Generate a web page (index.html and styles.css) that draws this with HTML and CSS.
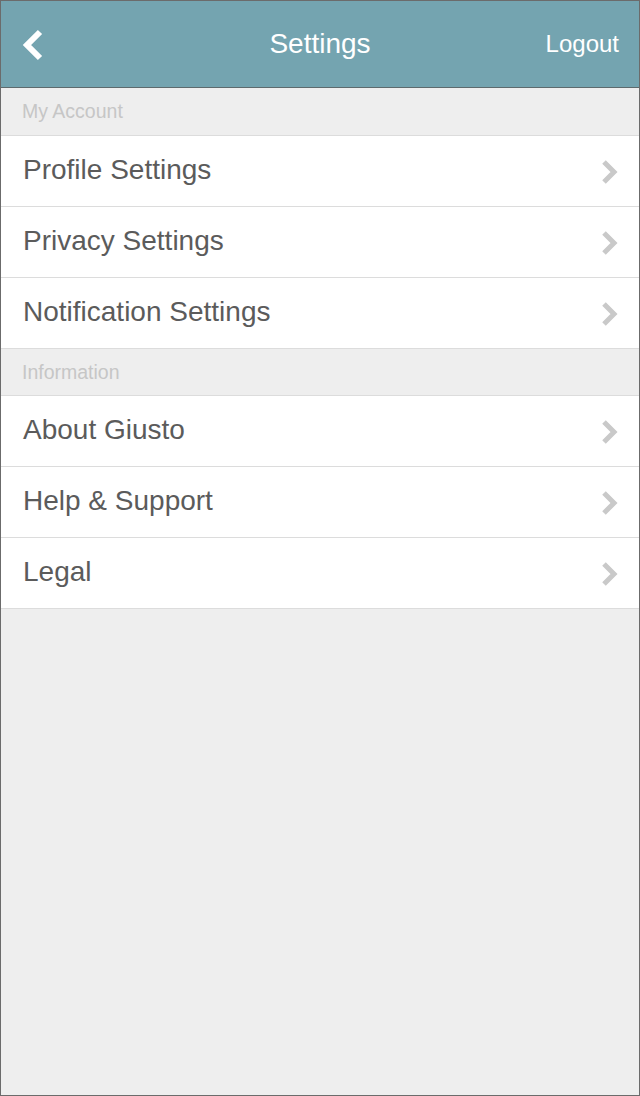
FILE: index.html
```html
<!DOCTYPE html>
<html>
<head>
<meta charset="utf-8">
<title>Settings</title>
<link rel="stylesheet" href="styles.css">
</head>
<body>
<div class="screen">
  <header class="topbar">
    <div class="back">
      <svg width="24" height="32" viewBox="0 0 24 32"><path d="M19 3 L6 16 L19 29" fill="none" stroke="#fff" stroke-width="6" stroke-linejoin="miter"/></svg>
    </div>
    <div class="title">Settings</div>
    <div class="logout">Logout</div>
  </header>

  <div class="section section-first">My Account</div>
  <div class="row"><span class="label">Profile Settings</span><svg class="chev" width="18" height="26" viewBox="0 0 18 26"><path d="M3 3 L13 13 L3 23" fill="none" stroke="#c9c9c9" stroke-width="5"/></svg></div>
  <div class="row"><span class="label">Privacy Settings</span><svg class="chev" width="18" height="26" viewBox="0 0 18 26"><path d="M3 3 L13 13 L3 23" fill="none" stroke="#c9c9c9" stroke-width="5"/></svg></div>
  <div class="row"><span class="label">Notification Settings</span><svg class="chev" width="18" height="26" viewBox="0 0 18 26"><path d="M3 3 L13 13 L3 23" fill="none" stroke="#c9c9c9" stroke-width="5"/></svg></div>

  <div class="section">Information</div>
  <div class="row"><span class="label">About Giusto</span><svg class="chev" width="18" height="26" viewBox="0 0 18 26"><path d="M3 3 L13 13 L3 23" fill="none" stroke="#c9c9c9" stroke-width="5"/></svg></div>
  <div class="row"><span class="label">Help &amp; Support</span><svg class="chev" width="18" height="26" viewBox="0 0 18 26"><path d="M3 3 L13 13 L3 23" fill="none" stroke="#c9c9c9" stroke-width="5"/></svg></div>
  <div class="row"><span class="label">Legal</span><svg class="chev" width="18" height="26" viewBox="0 0 18 26"><path d="M3 3 L13 13 L3 23" fill="none" stroke="#c9c9c9" stroke-width="5"/></svg></div>
</div>
</body>
</html>
```

FILE: styles.css
```css
html, body {
  margin: 0;
  padding: 0;
}
body {
  font-family: "Liberation Sans", Arial, sans-serif;
}
.screen {
  box-sizing: border-box;
  width: 640px;
  height: 1096px;
  border: 1px solid #6b6b6b;
  background: #eeeeee;
  overflow: hidden;
}
.topbar {
  box-sizing: border-box;
  height: 87px;
  background: #74a4b0;
  border-bottom: 1px solid #5d6a6d;
  display: grid;
  grid-template-columns: 1fr auto 1fr;
  align-items: center;
  padding: 0 20px 0 20px;
  color: #fff;
}
.back {
  display: flex;
  align-items: center;
  padding-top: 1px;
}
.title {
  font-size: 28px;
  text-align: center;
}
.logout {
  font-size: 24px;
  text-align: right;
}
.section {
  box-sizing: border-box;
  height: 47px;
  background: #eeeeee;
  border-bottom: 1px solid #dcdcdc;
  color: #c6c6c6;
  font-size: 19.5px;
  display: flex;
  align-items: center;
  padding-left: 21px;
}
.section-first {
  height: 48px;
}
.row {
  box-sizing: border-box;
  height: 71px;
  background: #ffffff;
  border-bottom: 1px solid #dcdcdc;
  display: flex;
  align-items: center;
  justify-content: space-between;
  padding: 0 20px 3px 22px;
}
.label {
  font-size: 28px;
  color: #5b5b5b;
}
.chev {
  display: block;
  margin-top: 5px;
}
```
